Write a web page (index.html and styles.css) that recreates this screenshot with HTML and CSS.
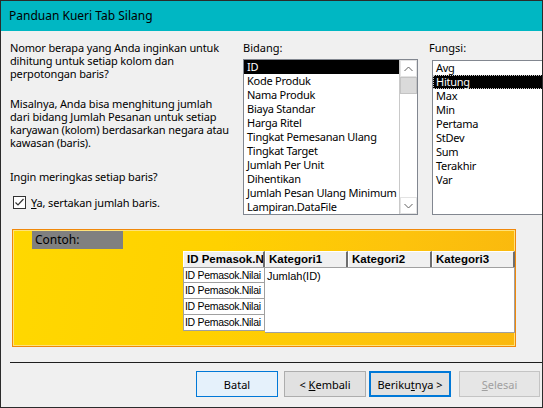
FILE: index.html
```html
<!DOCTYPE html>
<html lang="id">
<head>
  <meta charset="UTF-8">
  <title>Panduan Kueri Tab Silang</title>
  <link rel="stylesheet" href="styles.css">
</head>
<body>
  <div class="window">
    <!-- Judul -->
    <div class="titlebar">Panduan Kueri Tab Silang</div>

    <div class="content">
      <div class="top">
        <!-- Penjelasan -->
        <div class="intro">
          <p class="p1">Nomor berapa yang Anda inginkan untuk<br>dihitung untuk setiap kolom dan<br>perpotongan baris?</p>
          <p class="p2">Misalnya, Anda bisa menghitung jumlah<br>dari bidang Jumlah Pesanan untuk setiap<br>karyawan (kolom) berdasarkan negara atau<br>kawasan (baris).</p>
          <p class="p3">Ingin meringkas setiap baris?</p>
          <div class="check-row">
            <span class="checkbox">
              <svg width="13" height="13" viewBox="0 0 13 13"><polyline points="2.5,6.5 5,9 10.5,3" fill="none" stroke="#333" stroke-width="1.2"/></svg>
            </span>
            <span><u>Y</u>a, sertakan jumlah baris.</span>
          </div>
        </div>

        <!-- Bidang -->
        <div class="fields">
          <div class="label">Bidang:</div>
          <div class="listbox">
            <div class="items">
              <div class="item selected">ID</div>
              <div class="item">Kode Produk</div>
              <div class="item">Nama Produk</div>
              <div class="item">Biaya Standar</div>
              <div class="item">Harga Ritel</div>
              <div class="item">Tingkat Pemesanan Ulang</div>
              <div class="item">Tingkat Target</div>
              <div class="item">Jumlah Per Unit</div>
              <div class="item">Dihentikan</div>
              <div class="item">Jumlah Pesan Ulang Minimum</div>
              <div class="item">Lampiran.DataFile</div>
            </div>
            <div class="scrollbar">
              <div class="sb-btn">
                <svg width="9" height="6" viewBox="0 0 9 6"><polyline points="0.5,5 4.5,1 8.5,5" fill="none" stroke="#606060"/></svg>
              </div>
              <div class="sb-thumb"></div>
              <div class="sb-track"></div>
              <div class="sb-btn">
                <svg width="9" height="6" viewBox="0 0 9 6"><polyline points="0.5,1 4.5,5 8.5,1" fill="none" stroke="#606060"/></svg>
              </div>
            </div>
          </div>
        </div>

        <!-- Fungsi -->
        <div class="funcs">
          <div class="label">Fungsi:</div>
          <div class="listbox func-list">
            <div class="items">
              <div class="item">Avg</div>
              <div class="item selected focus">Hitung</div>
              <div class="item">Max</div>
              <div class="item">Min</div>
              <div class="item">Pertama</div>
              <div class="item">StDev</div>
              <div class="item">Sum</div>
              <div class="item">Terakhir</div>
              <div class="item">Var</div>
            </div>
          </div>
        </div>
      </div>

      <!-- Contoh -->
      <div class="sample">
        <div class="sample-label">Contoh:</div>
        <div class="grid">
          <div class="head">
            <div class="hcell">ID Pemasok.N</div>
            <div class="hcell">Kategori1</div>
            <div class="hcell">Kategori2</div>
            <div class="hcell">Kategori3</div>
          </div>
          <div class="rows">
            <div class="row-heads">
              <div class="rcell">ID Pemasok.Nilai</div>
              <div class="rcell">ID Pemasok.Nilai</div>
              <div class="rcell">ID Pemasok.Nilai</div>
              <div class="rcell">ID Pemasok.Nilai</div>
            </div>
            <div class="values">Jumlah(ID)</div>
          </div>
        </div>
      </div>

      <div class="separator"></div>

      <!-- Tombol -->
      <div class="buttons">
        <button class="btn btn-cancel">Batal</button>
        <button class="btn btn-back">&lt; <u>K</u>embali</button>
        <button class="btn btn-next">Beriku<u>t</u>nya &gt;</button>
        <button class="btn btn-finish" disabled><u>S</u>elesai</button>
      </div>
    </div>
  </div>
</body>
</html>
```

FILE: styles.css
```css
body {
  margin: 0;
  background: #f0f0f0;
  font-family: "Noto Sans", sans-serif;
  font-size: 11px;
  color: #000;
}

.window {
  width: 543px;
  height: 408px;
  box-sizing: border-box;
  border: 1px solid #2b2b2b;
  background: #f0f0f0;
  overflow: hidden;
}

.titlebar {
  height: 30px;
  line-height: 30px;
  padding-left: 8px;
  background: #00b7c3;
  font-size: 12px;
}

.content {
  padding: 10px 0 0 9px;
}

/* Bagian atas */
.top {
  display: flex;
  height: 188px;
}
.top > div { flex: none; }

.intro {
  width: 233px;
  line-height: 13px;
  white-space: nowrap;
  letter-spacing: -0.15px;
}
.intro p { margin: 0; }
.intro .p2 { margin-top: 17px; }
.intro .p3 { margin-top: 21px; }

.check-row {
  display: flex;
  align-items: center;
  gap: 5px;
  margin-top: 13px;
  margin-left: 3px;
}
.checkbox {
  width: 13px;
  height: 13px;
  box-sizing: border-box;
  border: 1px solid #333;
  background: #fff;
  display: flex;
}
.checkbox svg { margin: -1px; }

.label {
  height: 13px;
  line-height: 13px;
}

.fields { width: 186px; }
.fields .listbox { margin-top: 5px; width: 175px; }

.funcs .listbox { margin-top: 6px; margin-left: 3px; width: 130px; }

.listbox {
  display: flex;
  height: 156px;
  box-sizing: border-box;
  border: 1px solid #828790;
  background: #fff;
}
.func-list { height: 155px; }

.items {
  flex: 1;
  overflow: hidden;
}
.item {
  height: 14px;
  line-height: 14px;
  padding-left: 3px;
  white-space: nowrap;
  letter-spacing: -0.25px;
}
.item.selected {
  background: #000;
  color: #fff;
}
.item.focus {
  outline: 1px dotted #c8c8c8;
  outline-offset: -1px;
}

.scrollbar {
  width: 17px;
  display: flex;
  flex-direction: column;
  border-left: 1px solid #c9c9c9;
  background: #fff;
}
.sb-btn {
  height: 17px;
  display: flex;
  align-items: center;
  justify-content: center;
  box-sizing: border-box;
  border: 1px solid #e3e3e3;
}
.sb-thumb {
  height: 17px;
  background: #dadada;
  border: 1px solid #c4c4c4;
  box-sizing: border-box;
}
.sb-track { flex: 1; }

/* Contoh */
.sample {
  margin-left: 2px;
  width: 504px;
  height: 118px;
  box-sizing: border-box;
  border: 1px solid #f0880a;
  box-shadow: inset 0 0 0 1px #ffe27a;
  background: linear-gradient(100deg, #ffd800 0%, #ffd100 40%, #fdc30c 75%, #fab80e 100%);
}
.sample-label {
  margin: 1px 0 0 19px;
  width: 91px;
  height: 18px;
  line-height: 18px;
  padding-left: 3px;
  box-sizing: border-box;
  background: #808080;
  font-size: 12px;
}

.grid {
  margin: 2px 0 0 170px;
  width: 332px;
  font-family: "Liberation Sans", sans-serif;
  font-size: 11px;
}
.head {
  display: flex;
  height: 16px;
}
.hcell {
  width: 83px;
  box-sizing: border-box;
  padding-left: 3px;
  line-height: 15px;
  background: #f0f0f0;
  border-top: 1px solid #fff;
  border-left: 1px solid #fff;
  border-right: 2px solid #6e6e6e;
  font-weight: bold;
  font-size: 11.5px;
  white-space: nowrap;
  overflow: hidden;
}
.hcell:first-child { width: 82px; }
.hcell:nth-child(3) { width: 84px; }

.rows { display: flex; }
.row-heads { width: 82px; }
.rcell {
  height: 16px;
  line-height: 15px;
  box-sizing: border-box;
  padding-left: 1px;
  background: #fff;
  border: 1px solid #a0a0a0;
  border-top-width: 0;
  white-space: nowrap;
  overflow: hidden;
  font-size: 10.5px;
  letter-spacing: -0.3px;
}
.rcell:first-child { border-top-width: 1px; }
.values {
  flex: 1;
  height: 66px;
  box-sizing: border-box;
  padding: 1px 0 0 2px;
  line-height: 15px;
  background: #fff;
  border: 1px solid #a0a0a0;
  border-left: 0;
}

.separator {
  margin-top: 15px;
  height: 1px;
  background: #1e1e1e;
}

/* Tombol */
.buttons {
  display: flex;
  margin-top: 8px;
  padding-left: 186px;
}
.btn {
  width: 82px;
  height: 26px;
  padding: 0;
  font-family: "Noto Sans", sans-serif;
  font-size: 11px;
  color: #000;
  background: #e1e1e1;
  border: 1px solid #adadad;
}
.btn-cancel {
  background: #e5f1fb;
  border-color: #0078d7;
}
.btn-back { margin-left: 6px; }
.btn-next {
  margin-left: 3px;
  border: 2px solid #0078d7;
}
.btn-finish {
  margin-left: 8px;
  width: 81px;
  background: #e6e6e6;
  border-color: #c4c4c4;
  color: #a0a0a0;
}
```
